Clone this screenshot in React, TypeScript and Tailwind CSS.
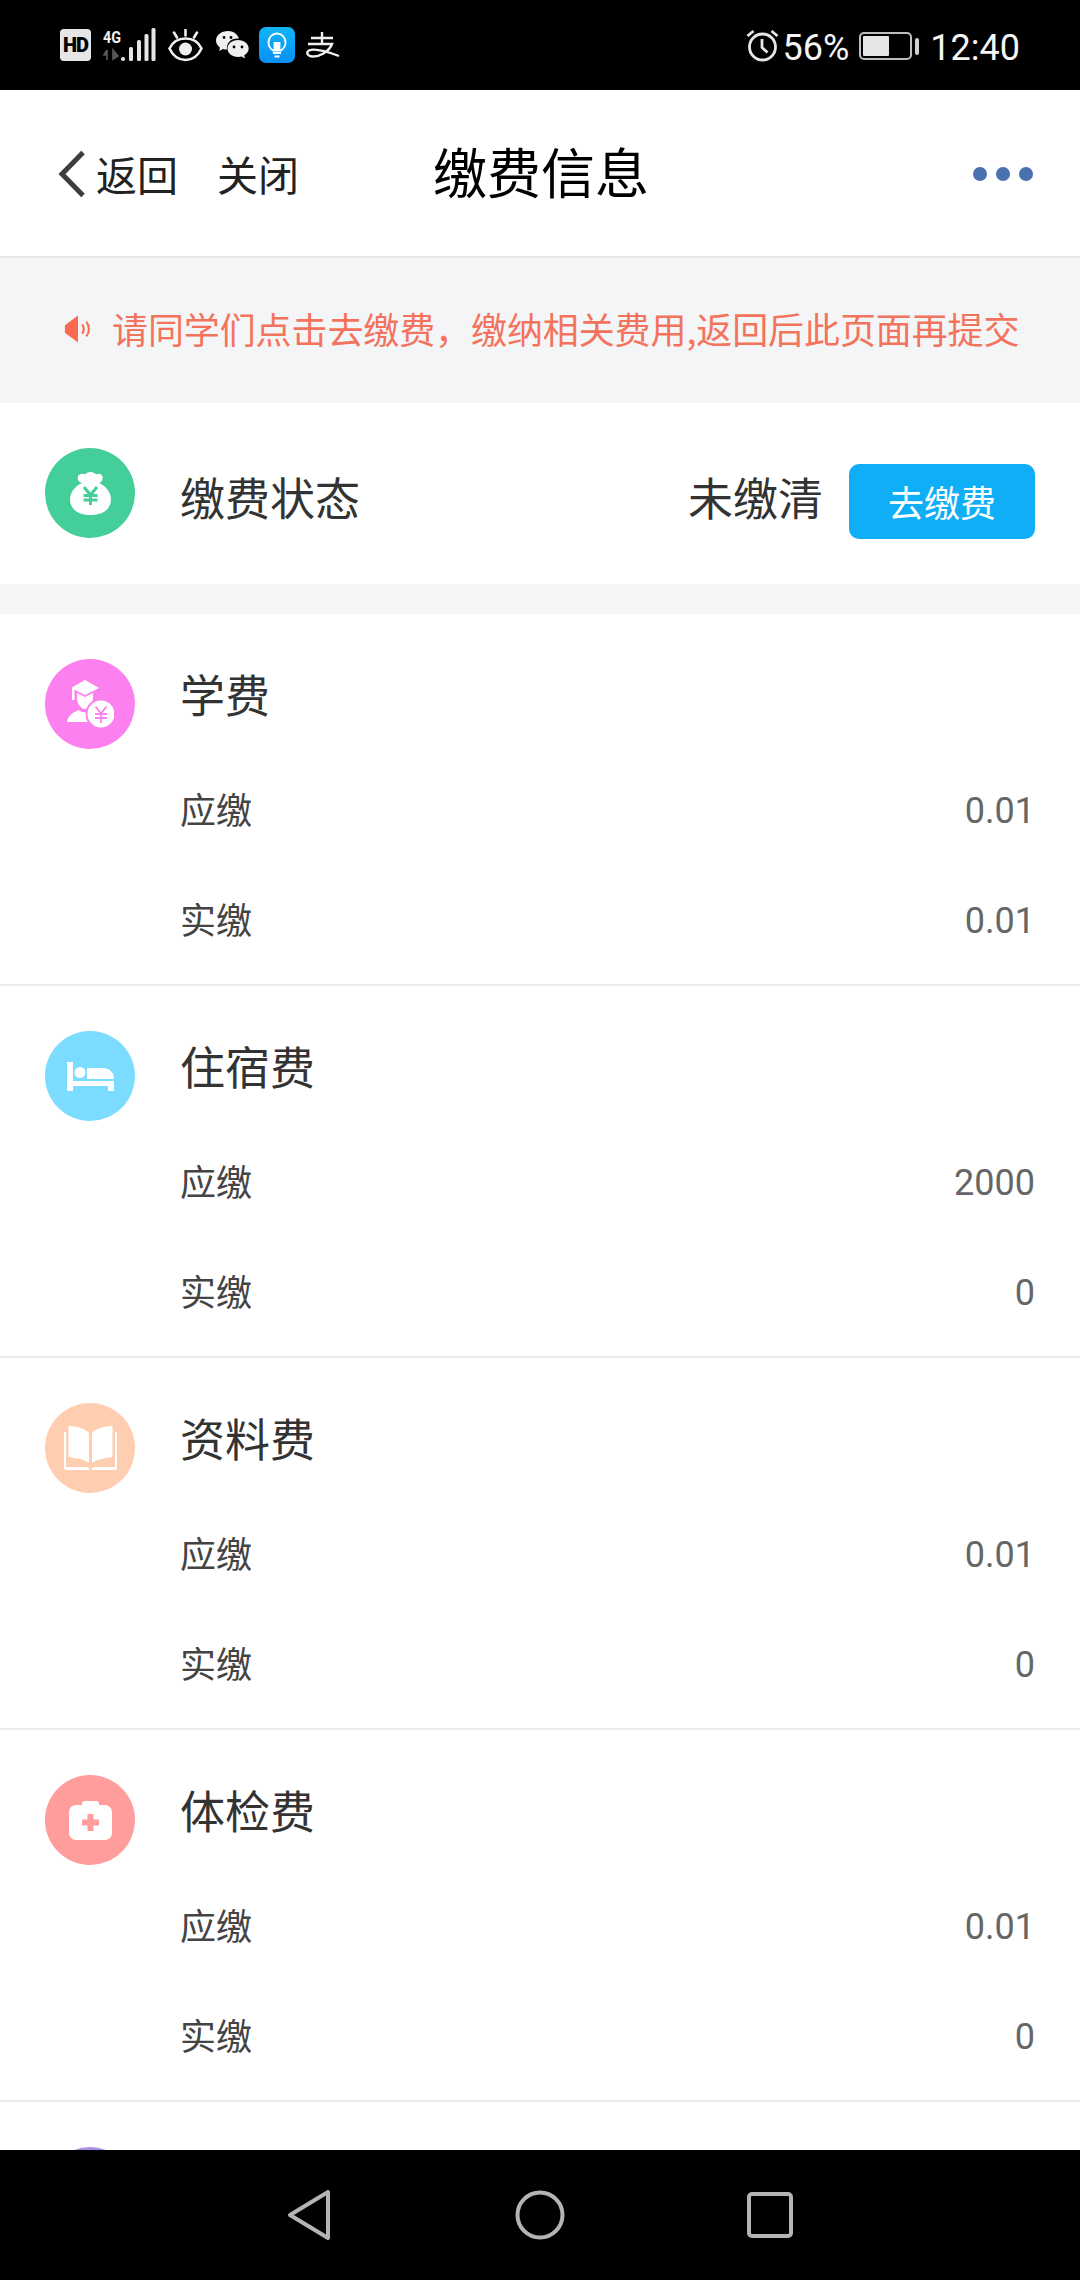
import React from 'react';

const cjk = "font-['Noto_Sans_CJK_SC','Noto_Sans',sans-serif]";

const StatusBar = () => (
  <div className="flex h-[90px] shrink-0 items-center justify-between bg-black pl-[60px] pr-[60px] text-[#f0f0f0]">
    <div className="flex items-center">
      {/* HD */}
      <div className="flex h-[32px] w-[31px] items-center justify-center rounded-[4px] bg-[#e6e6e6] font-['Roboto',sans-serif] text-[20px] font-black leading-none tracking-[-1px] text-black">
        HD
      </div>
      {/* 4G + signal */}
      <svg className="ml-[12px]" width="53" height="34" viewBox="0 0 53 34">
        <rect x="18" y="29" width="4" height="4" rx="2" fill="#e6e6e6" />
        <rect x="26" y="19" width="4" height="14" rx="1.5" fill="#e6e6e6" />
        <rect x="34" y="12" width="4" height="21" rx="1.5" fill="#e6e6e6" />
        <rect x="41.500" y="6" width="4" height="27" rx="1.5" fill="#e6e6e6" />
        <rect x="48.500" y="0" width="4" height="33" rx="1.5" fill="#e6e6e6" />
        <path d="M4 22l-3 5h3m0-5v10M10 32v-10M10 22l5 6-5 3z" stroke="#5a5a5a" strokeWidth="1.6" fill="#555" />
        <text x="0" y="15" fill="#f0f0f0" fontFamily="Roboto" fontWeight="700" fontSize="17" textLength="18" lengthAdjust="spacingAndGlyphs">4G</text>
      </svg>
      {/* eye */}
      <svg className="ml-[12px]" width="35" height="33" viewBox="0 0 35 33" fill="none" stroke="#f0f0f0" strokeWidth="2.6">
        <path d="M1.500 19.500C5 12 11 9.500 17.500 9.500S30 12 33.500 19.500C30 27 24 31 17.500 31S5 27 1.500 19.500z" />
        <circle cx="17.500" cy="20" r="6.500" fill="#f0f0f0" stroke="none" />
        <path d="M17.500 1v5.500M6 3.500l3 5M29 3.500l-3 5" strokeLinecap="round" />
      </svg>
      {/* wechat */}
      <svg className="ml-[13px]" width="33" height="30" viewBox="0 0 33 30">
        <path d="M12 1C5.500 1 0 5 0 10.500c0 3 1.700 5.500 4 7.200L3 21l4-2c1.200.4 2.500.6 4 .6C10 13 15 8 23 8.500 21.500 4 17.500 1 12 1z" fill="#f0f0f0" />
        <path d="M22 10c-6 0-10.500 3.700-10.500 8.500S16 27 22 27c1.300 0 2.500-.2 3.600-.5l3.400 2-.8-3.200c2.800-1.600 4.500-4 4.500-6.800 0-4.800-4.700-8.500-10.700-8.500z" fill="#f0f0f0" />
        <circle cx="8" cy="7.500" r="1.400" fill="#000" />
        <circle cx="15" cy="7.500" r="1.400" fill="#000" />
        <circle cx="18" cy="17" r="1.400" fill="#000" />
        <circle cx="26" cy="17" r="1.400" fill="#000" />
      </svg>
      {/* lightbulb app */}
      <div className="ml-[10px] flex h-[36px] w-[36px] items-center justify-center rounded-[7px] bg-gradient-to-b from-[#12b5f5] to-[#0a8ff5]">
        <svg width="20" height="26" viewBox="0 0 20 26" fill="none" stroke="#fff" strokeWidth="1.800">
          <path d="M6 18.500C3 16.500 1.500 14 1.500 10.500 1.500 5.500 5.200 1.500 10 1.500s8.500 4 8.500 9c0 3.500-1.500 6-4.500 8z" />
          <path d="M7.500 11h5v7h-5zM6 21h8M7.500 24.500h5" fill="#fff" />
        </svg>
      </div>
      {/* alipay */}
      <svg className="ml-[11px]" width="34" height="26" viewBox="0 0 34 26" fill="none" stroke="#f0f0f0" strokeWidth="2.400">
        <path d="M5 6h22M16 0v12M2 12h24C23 20 13 25 6 24.500 1 24 0 20 3 18.500c6-3 18 1 30 5.500" />
      </svg>
    </div>
    <div className="flex items-center">
      {/* alarm */}
      <svg width="33" height="33" viewBox="0 0 33 33" fill="none" stroke="#e6e6e6" strokeWidth="2.800">
        <circle cx="16.500" cy="18" r="13" />
        <path d="M16 10v8.500l5.500 5M1.500 7l6-5M31.500 7l-6-5" />
      </svg>
      <span className="ml-[4px] mt-[6px] font-['Roboto',sans-serif] text-[36px] leading-none text-[#f5f5f5]">56%</span>
      <div className="ml-[10px] mt-[2px] flex h-[28px] w-[53px] items-center rounded-[5px] border-[2px] border-[#bdbdbd] p-[2px]">
        <div className="h-full w-[26px] rounded-[1px] bg-[#e6e6e6]" />
      </div>
      <div className="ml-[3px] mt-[2px] h-[17px] w-[4px] rounded-[2px] bg-[#cfcfcf]" />
      <span className="ml-[11px] mt-[6px] font-['Roboto',sans-serif] text-[36px] leading-none text-[#f5f5f5]">12:40</span>
    </div>
  </div>
);

const NavBar = () => (
  <div className={`relative flex h-[168px] shrink-0 items-center border-b-2 border-[#e8e8e8] bg-white pl-[58px] pr-[47px] ${cjk}`}>
    <svg className="mt-[2px]" width="28" height="48" viewBox="0 0 28 48" fill="none" stroke="#3d3d3d" strokeWidth="5">
      <path d="M25 2.500L4 24l21 21.500" />
    </svg>
    <span className="ml-[10px] text-[41px] leading-none text-[#222]">返回</span>
    <span className="ml-[39px] text-[41px] leading-none text-[#222]">关闭</span>
    <span className="absolute left-[433px] top-[48px] text-[54px] leading-[66px] text-black">缴费信息</span>
    <div className="ml-auto mt-[2px] flex gap-[9px]">
      <div className="h-[14px] w-[14px] rounded-full bg-[#4a70ad]" />
      <div className="h-[14px] w-[14px] rounded-full bg-[#4a70ad]" />
      <div className="h-[14px] w-[14px] rounded-full bg-[#4a70ad]" />
    </div>
  </div>
);

const Notice = () => (
  <div className={`flex h-[145px] shrink-0 items-center bg-[#f4f5f7] pl-[64px] ${cjk}`}>
    <svg className="mb-[4px]" width="28" height="28" viewBox="0 0 28 30">
      <path d="M0 11L14 .5v29L0 19z" fill="#fb6a50" />
      <path d="M18.500 10c2 3 2 7 0 10M23 7c3.500 4.500 3.500 11.500 0 16" stroke="#fb6a50" strokeWidth="2.200" fill="none" />
    </svg>
    <span className="mb-[6px] ml-[20px] text-[36px] leading-none tracking-[-0.1px] text-[#f4735c]">
      请同学们点击去缴费，缴纳相关费用,返回后此页面再提交
    </span>
  </div>
);

const IconCircle = ({ color, children }: { color: string; children?: React.ReactNode }) => (
  <div className={`flex h-[90px] w-[90px] shrink-0 items-center justify-center rounded-full ${color}`}>
    {children}
  </div>
);

const BagIcon = () => (
  <svg width="41" height="45" viewBox="0 0 41 45">
    <path d="M12 13C7 12 6 5 11 4c2-.5 3 0 4 .5C17 1 24 1 26 4.500c2-1 5-1 6 1 2 3-.5 7-3 7.500 8 4 12 10 12 16.500C41 39 33 45 20.500 45S0 39 0 29.500C0 23 4 17 12 13z" fill="#fff" />
    <path d="M14 17l6.500 8 6.500-8M13.500 25.500h14M13.500 30h14M20.500 25v10" stroke="#44cf9a" strokeWidth="3" fill="none" />
  </svg>
);

const GradIcon = () => (
  <svg width="47" height="48" viewBox="0 0 47 48">
    <path d="M18 0L32 8l-14 7L4 8z" fill="#fff" />
    <path d="M5 9h2.500v11H5z" fill="#fff" />
    <path d="M10 13l8 4 8-4v5c0 6-4 11-8 11s-8-5-8-11z" fill="#fff" />
    <path d="M0 42c1-7 7-10 12-12 2 3 9 3 12 0l8 4v8z" fill="#fff" />
    <circle cx="34" cy="34" r="15.500" fill="#fc80ee" />
    <circle cx="34" cy="34" r="13.500" fill="#fff" />
    <path d="M28.500 26.500l5.500 7 5.500-7M28 34h12M28 38h12M34 33v10" stroke="#fc80ee" strokeWidth="1.800" fill="none" />
  </svg>
);

const BedIcon = () => (
  <svg width="47" height="29" viewBox="0 0 47 29" fill="#fff">
    <path d="M0 0h6v19h41v10h-6v-5H6v5H0z" />
    <circle cx="13" cy="10.500" r="5.500" />
    <path d="M20 6h16c6 0 11 4 11 11H20z" />
  </svg>
);

const BookIcon = () => (
  <svg width="53" height="44" viewBox="0 0 53 44" fill="#fff">
    <path d="M4.500 0c8 .5 16 2 20.500 7v30c-4-3-12-5-20.500-6zM48.500 0c-8 .5-16 2-20.500 7v30c4-3 12-5 20.500-6z" />
    <path d="M0 6h2v35h20c1.500 0 3 .5 3.500 3H2c-1 0-2-1-2-2zM53 6h-2v35H31c-1.500 0-3 .5-3.500 3H51c1 0 2-1 2-2z" />
  </svg>
);

const KitIcon = () => (
  <svg width="43" height="39" viewBox="0 0 43 39">
    <rect x="13" y="0" width="17" height="6" rx="3" fill="#fff" />
    <rect x="0" y="4" width="43" height="35" rx="7" fill="#fff" />
    <path d="M21.500 13v17M13 21.500h17" stroke="#ff9c9c" strokeWidth="6" />
  </svg>
);

type Fee = { name: string; due: string; paid: string; color: string; icon: React.ReactNode };

const fees: Fee[] = [
  { name: '学费', due: '0.01', paid: '0.01', color: 'bg-[#fc80ee]', icon: <GradIcon /> },
  { name: '住宿费', due: '2000', paid: '0', color: 'bg-[#7cdcff]', icon: <BedIcon /> },
  { name: '资料费', due: '0.01', paid: '0', color: 'bg-[#ffcdb0]', icon: <BookIcon /> },
  { name: '体检费', due: '0.01', paid: '0', color: 'bg-[#ff9c9c]', icon: <KitIcon /> },
];

const FeeRow = ({ label, value }: { label: string; value: string }) => (
  <div className="flex h-[110px] items-center justify-between pl-[180px] pr-[45px]">
    <span className="text-[36px] leading-none text-[#444]">{label}</span>
    <span className="translate-y-[3px] font-['Roboto',sans-serif] text-[36px] leading-none text-[#666]">{value}</span>
  </div>
);

const FeeSection = ({ fee }: { fee: Fee }) => (
  <div className="h-[372px] shrink-0 border-b-2 border-[#ececec]">
    <div className="flex items-center pl-[45px] pt-[45px]">
      <IconCircle color={fee.color}>{fee.icon}</IconCircle>
      <span className="ml-[45px] -translate-y-[11px] text-[45px] leading-none text-[#333]">{fee.name}</span>
    </div>
    <div className="mt-[4px]">
      <FeeRow label="应缴" value={fee.due} />
      <FeeRow label="实缴" value={fee.paid} />
    </div>
  </div>
);

const BottomBar = () => (
  <div className="flex h-[130px] shrink-0 items-center justify-center bg-black">
    <svg width="44" height="52" viewBox="0 0 44 52" fill="none" stroke="#b4b4b4" strokeWidth="4" strokeLinejoin="round">
      <path d="M41 3L3 26l38 23z" />
    </svg>
    <svg className="ml-[184px]" width="50" height="50" viewBox="0 0 50 50" fill="none" stroke="#b4b4b4" strokeWidth="4">
      <circle cx="25" cy="25" r="22.500" />
    </svg>
    <svg className="ml-[182px]" width="46" height="46" viewBox="0 0 46 46" fill="none" stroke="#b4b4b4" strokeWidth="4">
      <rect x="2" y="2" width="42" height="42" rx="3" />
    </svg>
  </div>
);

export default function App() {
  return (
    <div className={`flex h-[2280px] w-[1080px] flex-col overflow-hidden bg-white ${cjk}`}>
      <StatusBar />
      <NavBar />
      <Notice />
      <div className="min-h-0 flex-1 overflow-hidden">
        <div className="flex h-[181px] items-center pb-[2px] pl-[45px] pr-[45px]">
          <IconCircle color="bg-[#44cf9a]">
            <BagIcon />
          </IconCircle>
          <span className="ml-[45px] mt-[8px] text-[45px] leading-none text-[#333]">缴费状态</span>
          <span className="ml-auto mt-[8px] text-[45px] leading-none text-[#333]">未缴清</span>
          <button className="ml-[26px] mt-[17px] h-[75px] w-[186px] rounded-[10px] bg-[#10aef6] text-[36px] leading-none text-white">
            去缴费
          </button>
        </div>
        <div className="h-[30px] bg-[#f4f5f7]" />
        {fees.map((fee) => (
          <FeeSection key={fee.name} fee={fee} />
        ))}
        {/* next section, only the top of its icon shows above the nav keys */}
        <div className="pl-[45px] pt-[45px]">
          <IconCircle color="bg-[#ac8ee8]" />
        </div>
      </div>
      <BottomBar />
    </div>
  );
}
